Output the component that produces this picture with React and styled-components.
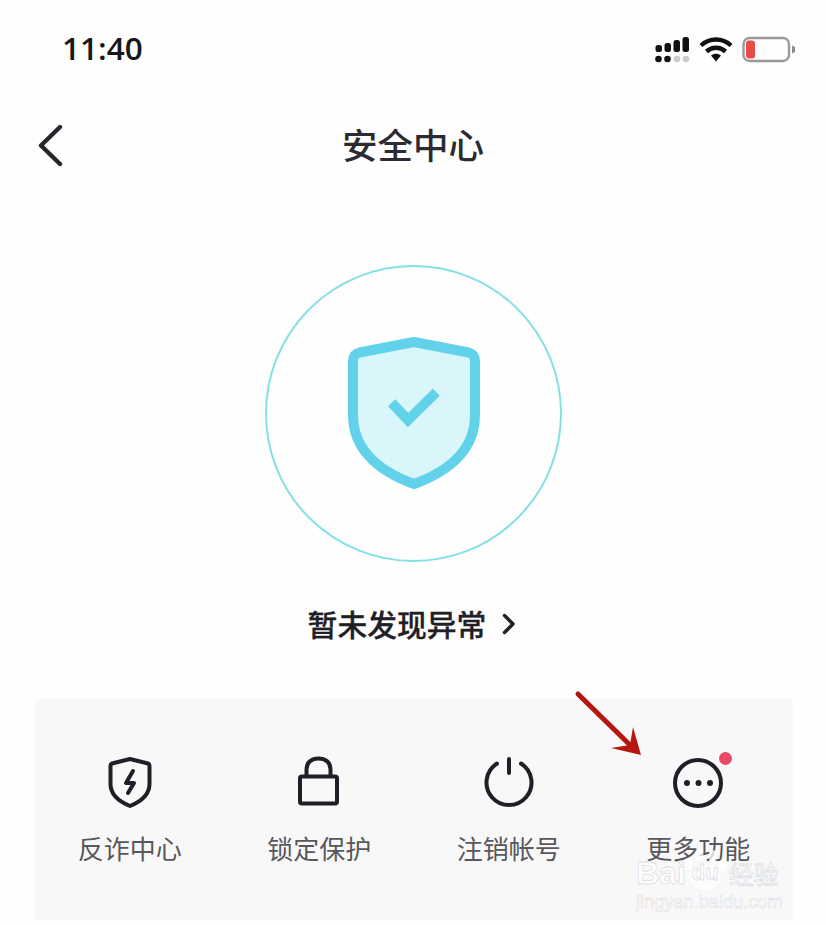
import React from "react";
import styled, { createGlobalStyle } from "styled-components";

const Global = createGlobalStyle`
  html, body { margin: 0; padding: 0; background: #fff; }
  * { box-sizing: border-box; }
`;
const CJK = `"Noto Sans CJK SC", "Noto Sans", sans-serif`;

const Page = styled.div`
  position: relative;
  width: 826px;
  height: 925px;
  overflow: hidden;
  background: #fefefe;
  font-family: ${CJK};
  color: #26262c;
`;
const StatusBar = styled.div`
  height: 98px;
  padding: 0 31px 0 62px;
  display: flex;
  align-items: center;
  justify-content: space-between;
`;
const Time = styled.span`
  margin-top: -2px;
  font-family: "Open Sans", sans-serif;
  font-size: 31.5px;
  font-weight: 600;
  line-height: 36px;
  color: #17171a;
`;
const StatusIcons = styled.svg`
  display: block;
  width: 140px;
  height: 30px;
`;
const Header = styled.header`
  position: relative;
  height: 94px;
  display: flex;
  align-items: center;
  justify-content: center;
`;
const BackIcon = styled.svg`
  position: absolute;
  left: 36px;
  top: 25px;
  width: 30px;
  height: 44px;
`;
const Title = styled.h1`
  margin: -3px 0 0;
  font-size: 35.5px;
  font-weight: 500;
  line-height: 48px;
  color: #2b2b31;
`;
const Hero = styled.section`
  margin-top: 73px;
  display: flex;
  flex-direction: column;
  align-items: center;
`;
const Ring = styled.div`
  width: 297px;
  height: 297px;
  border: 2.500px solid #85e0e5;
  border-radius: 50%;
  display: flex;
  align-items: center;
  justify-content: center;
`;
const ShieldIcon = styled.svg`
  display: block;
  width: 132px;
  height: 152px;
  margin: -1px 0 0 1px;
`;
const StatusLink = styled.div`
  margin-top: 41px;
  height: 40px;
  display: flex;
  align-items: center;
  gap: 16px;
  margin-left: -2px;
  font-size: 29.800px;
  font-weight: 500;
  color: #1f1f25;
  -webkit-text-stroke: 0.3px #1f1f25;
`;
const Chevron = styled.svg`
  display: block;
  width: 14px;
  height: 22px;
  margin-top: 1px;
`;
const Panel = styled.section`
  margin: 56px 33px 0 35px;
  height: 221px;
  padding-top: 55px;
  background: #f8f8f9;
  display: grid;
  grid-template-columns: repeat(4, 189.5px);
  align-items: start;
`;
const Item = styled.div`
  position: relative;
  display: flex;
  flex-direction: column;
  align-items: center;
  gap: 20px;
`;
const ItemIcon = styled.svg`
  display: block;
  width: 56px;
  height: 56px;
  fill: none;
  stroke: #1f1f27;
  stroke-width: 4px;
  stroke-linecap: round;
  stroke-linejoin: round;
`;
const Label = styled.span`
  font-size: 26px;
  line-height: 36px;
  color: #58585c;
`;
const Badge = styled.span`
  position: absolute;
  left: 115px;
  top: -2px;
  width: 13px;
  height: 13px;
  border-radius: 50%;
  background: #ea4a68;
`;
const Arrow = styled.svg`
  position: absolute;
  left: 570px;
  top: 685px;
  width: 80px;
  height: 80px;
`;
const Watermark = styled.div`
  position: absolute;
  left: 636px;
  top: 858px;
  width: 150px;
  color: rgba(255, 255, 255, 0.9);
  -webkit-text-stroke: 0.8px rgba(218, 218, 222, 0.9);
  pointer-events: none;
`;
const MarkTop = styled.div`
  display: flex;
  align-items: center;
  height: 30px;
  font-family: "Liberation Sans", sans-serif;
  font-size: 32px;
  font-weight: 700;
  line-height: 30px;
`;
const PawWrap = styled.span`
  position: relative;
  width: 33px;
  margin: 0 7px 0 3px;
  font-size: 22px;
  text-align: center;
`;
const Paw = styled.svg`
  position: absolute;
  left: -8px;
  top: -10px;
  width: 48px;
  height: 48px;
  z-index: -1;
`;
const MarkCjk = styled.span`
  font-family: ${CJK};
  font-size: 25px;
  font-weight: 400;
`;
const MarkUrl = styled.div`
  margin-top: 2px;
  font-family: "Liberation Sans", sans-serif;
  font-size: 18.200px;
  line-height: 24px;
  -webkit-text-stroke: 0.6px rgba(218, 218, 222, 0.9);
  white-space: nowrap;
`;
const MarkLayer = styled.div`
  position: relative;
  z-index: 0;
`;

const Status = () => (
  <StatusIcons viewBox="0 0 140 30">
    <g fill="#111">
      <rect x="0.500" y="11" width="6.500" height="7" rx="2.500" />
      <rect x="9.500" y="9" width="6.500" height="9" rx="2.500" />
      <rect x="18.500" y="6" width="6.500" height="12" rx="2.500" />
      <rect x="27.500" y="3" width="6.500" height="15" rx="2.500" />
      <circle cx="3.500" cy="25" r="3.300" />
      <circle cx="12.500" cy="25" r="3.300" />
    </g>
    <circle cx="22" cy="25" r="3.300" fill="#ccc" />
    <circle cx="31" cy="25" r="3.300" fill="#ccc" />
    <g fill="none" stroke="#111" strokeWidth="4.400">
      <path d="M46 11.500C54.500 3.500 67.500 3.500 76 11.500" />
      <path d="M51.500 17.500C57 12.500 65 12.500 70.500 17.500" />
    </g>
    <path d="M56 21.500C59 19 63 19 66 21.500L61 27.500Z" fill="#111" />
    <rect x="88.500" y="4" width="45.500" height="23" rx="6" fill="none" stroke="#9a9a9a" strokeWidth="2.400" />
    <rect x="91" y="6.500" width="9" height="18" rx="3" fill="#ea4b48" />
    <path d="M137 11.500L140 13V18L137 19.500Z" fill="#8a8a8a" />
  </StatusIcons>
);

const items = [
  {
    label: "反诈中心",
    icon: (
      <>
        <path d="M28 5L10 9.500Q8.500 10 8.500 12V30C8.500 40 17 47.500 28 52C39 47.500 47.500 40 47.500 30V12Q47.500 10 46 9.500Z" />
        <path d="M31 17L24 29H32L26 39" strokeWidth="4" />
      </>
    ),
  },
  {
    label: "锁定保护",
    icon: (
      <>
        <rect x="9" y="22.500" width="37" height="27" rx="2" />
        <path d="M15.500 22V15C15.500 8 21 4.500 27.500 4.500C34 4.500 39.500 8 39.500 15V22" />
      </>
    ),
  },
  {
    label: "注销帐号",
    icon: (
      <>
        <path d="M16 9.500A22.500 22.500 0 1 0 40 9.500" />
        <path d="M28 5V19" />
      </>
    ),
  },
  {
    label: "更多功能",
    badge: true,
    icon: (
      <>
        <circle cx="28" cy="29" r="23" />
        <g fill="#1f1f27" stroke="none">
          <circle cx="17" cy="29" r="3" />
          <circle cx="28.500" cy="29" r="3" />
          <circle cx="40" cy="29" r="3" />
        </g>
      </>
    ),
  },
];

export default function App() {
  return (
    <Page>
      <Global />
      <StatusBar>
        <Time>11:40</Time>
        <Status />
      </StatusBar>
      <Header>
        <BackIcon viewBox="0 0 30 44" fill="none" stroke="#26262c" strokeWidth="4.400" strokeLinecap="round" strokeLinejoin="round">
          <path d="M24 4L5 22.500L24 41" />
        </BackIcon>
        <Title>安全中心</Title>
      </Header>
      <Hero>
        <Ring>
          <ShieldIcon viewBox="0 0 132 152">
            <path
              d="M66 5L11.500 15.500Q5 17 5 24V78C5 112 30 134 66 147C102 134 127 112 127 78V24Q127 17 120.500 15.500Z"
              fill="#d9f6fa"
              stroke="#62d2ea"
              strokeWidth="10"
              strokeLinejoin="round"
            />
            <path d="M43.700 65.700L60 83L88.300 55.300" fill="none" stroke="#62d2ea" strokeWidth="10" />
          </ShieldIcon>
        </Ring>
        <StatusLink>
          暂未发现异常
          <Chevron viewBox="0 0 14 22" fill="none" stroke="#1f1f25" strokeWidth="3.400" strokeLinecap="round" strokeLinejoin="round">
            <path d="M2.500 2.500L11 11L2.500 19.500" />
          </Chevron>
        </StatusLink>
      </Hero>
      <Panel>
        {items.map((it) => (
          <Item key={it.label}>
            <ItemIcon viewBox="0 0 56 56">{it.icon}</ItemIcon>
            <Label>{it.label}</Label>
            {it.badge && <Badge />}
          </Item>
        ))}
      </Panel>
      <Arrow viewBox="0 0 80 80">
        <path d="M8 9L62 62" stroke="#b5170f" strokeWidth="5" strokeLinecap="round" fill="none" />
        <path d="M63 42L71 70L41 63L60 60Z" fill="#b5170f" />
      </Arrow>
      <Watermark>
        <MarkLayer>
          <MarkTop>
            Bai
            <PawWrap>
              <Paw viewBox="0 0 48 48">
                <g fill="#fff" fillOpacity="0.75" stroke="none">
                  <ellipse cx="24" cy="30" rx="16" ry="12" />
                  <ellipse cx="7" cy="16" rx="4.500" ry="6" />
                  <ellipse cx="18" cy="7" rx="4.500" ry="6" />
                  <ellipse cx="32" cy="8" rx="4.500" ry="6" />
                  <ellipse cx="42" cy="17" rx="4.500" ry="6" />
                </g>
              </Paw>
              du
            </PawWrap>
            <MarkCjk>经验</MarkCjk>
          </MarkTop>
          <MarkUrl>jingyan.baidu.com</MarkUrl>
        </MarkLayer>
      </Watermark>
    </Page>
  );
}
